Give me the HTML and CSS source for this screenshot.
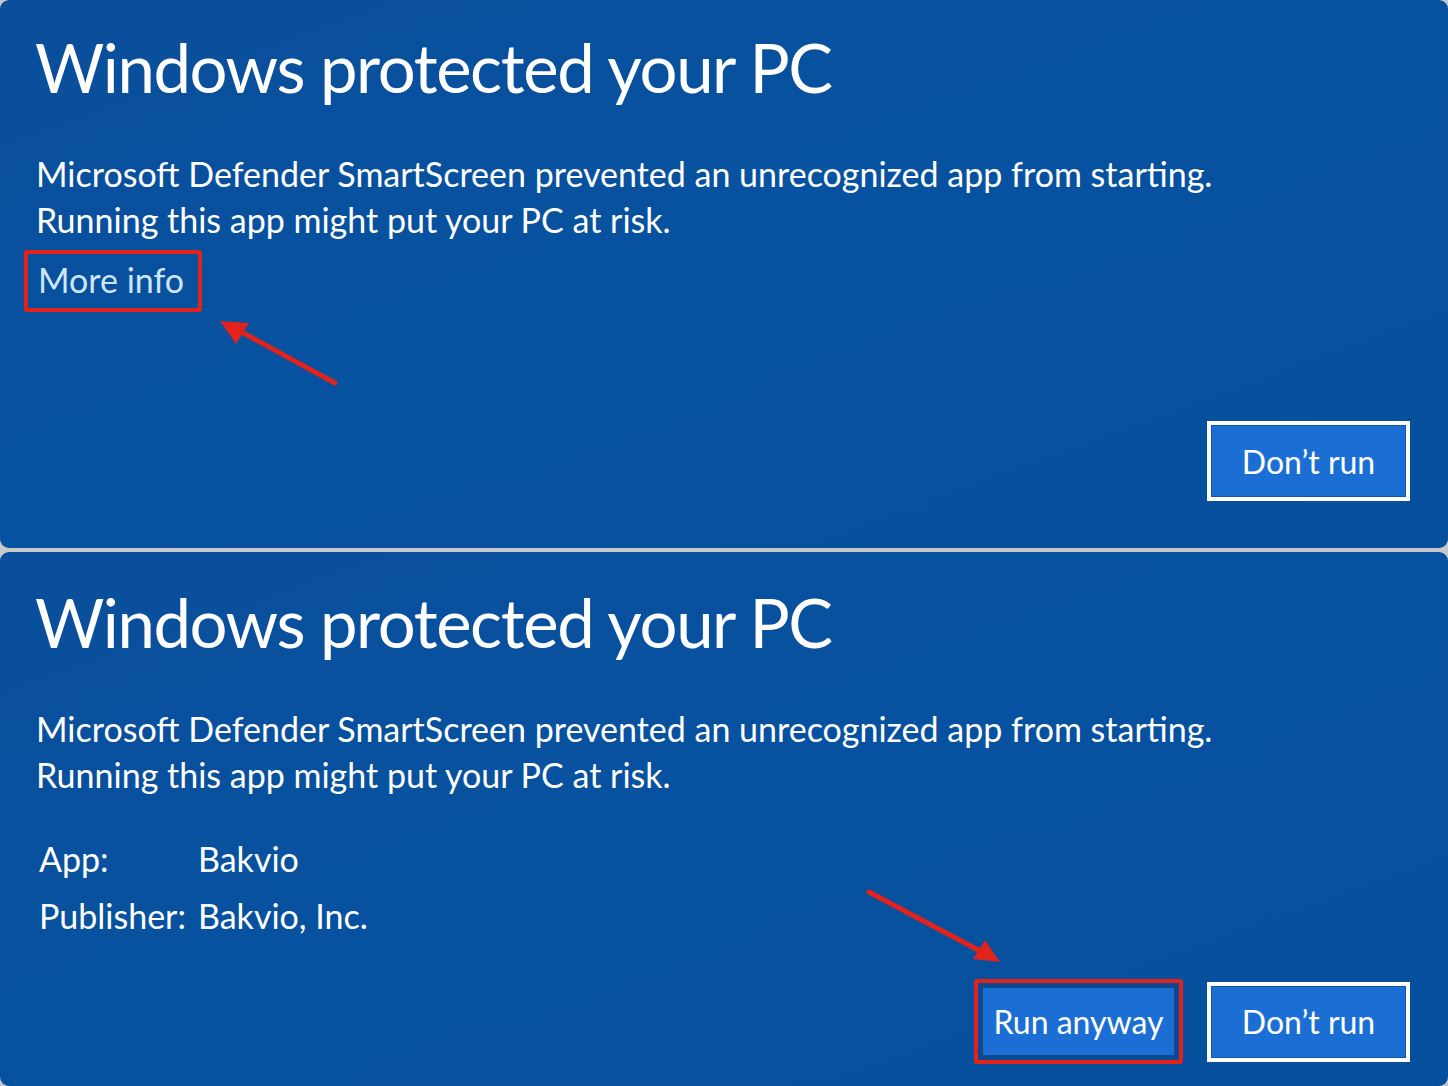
FILE: index.html
```html
<!DOCTYPE html>
<html lang="en">
<head>
    <meta charset="UTF-8">
    <meta name="viewport" content="width=device-width, initial-scale=1.0">
    <title>Windows protected your PC</title>
    <link rel="stylesheet" href="styles.css">
</head>
<body>

<div class="stack">
    <!-- first step: collapsed dialog -->
    <section class="dialog dialog-short">
        <h1>Windows protected your PC</h1>
        <p class="msg">Microsoft Defender SmartScreen prevented an unrecognized app from starting.<br>Running this app might put your PC at risk.</p>
        <div><a class="more-info mark">More info</a></div>
        <div class="actions">
            <button class="btn">Don’t run</button>
        </div>
        <svg class="pointer" width="1448" height="548" viewBox="0 0 1448 548">
            <line x1="335" y1="383" x2="238" y2="330" />
            <polygon points="220,321 249,323 236,344" />
        </svg>
    </section>

    <!-- second step: details expanded -->
    <section class="dialog dialog-tall">
        <h1>Windows protected your PC</h1>
        <p class="msg">Microsoft Defender SmartScreen prevented an unrecognized app from starting.<br>Running this app might put your PC at risk.</p>
        <div class="details">
            <span>App:</span><span>Bakvio</span>
            <span>Publisher:</span><span>Bakvio, Inc.</span>
        </div>
        <div class="actions">
            <div class="mark mark-btn"><button class="btn btn-focus">Run anyway</button></div>
            <button class="btn">Don’t run</button>
        </div>
        <svg class="pointer" width="1448" height="534" viewBox="0 0 1448 534">
            <line x1="869" y1="340" x2="982" y2="400" />
            <polygon points="1000,410 985,388 973,407" />
        </svg>
    </section>
</div>

</body>
</html>
```

FILE: styles.css
```css
*{
    margin: 0;
    padding: 0;
    box-sizing: border-box;
}

body{
    background: #c6c8cb;
    font-family: 'Lato', 'Noto Sans', sans-serif;
    color: #fff;
    overflow: hidden;
}

.stack{
    display: flex;
    flex-direction: column;
    gap: 4px;
}

.dialog{
    position: relative;
    display: flex;
    flex-direction: column;
    padding: 27px 38px 0 36px;
    background: linear-gradient(160deg, #0a4e9b 0%, #0752a0 45%, #064f9d 100%);
    border-radius: 9px;
}
.dialog-short{
    height: 548px;
    padding-bottom: 47px;
}
.dialog-tall{
    height: 534px;
    padding-top: 30px;
}

h1{
    font-size: 67px;
    font-weight: 400;
    line-height: 80px;
    letter-spacing: -1.4px;
    margin-left: -1px;
}

.msg{
    font-size: 34px;
    line-height: 46px;
    margin-top: 44px;
}

.mark{
    border: 4px solid #e1231b;
    border-radius: 3px;
}

.more-info{
    display: inline-block;
    margin: 7px 0 0 -12px;
    padding: 3px 14px 5px 10px;
    font-size: 34px;
    line-height: 46px;
    color: #cfe5fa;
}

.details{
    display: grid;
    grid-template-columns: 159px auto;
    row-gap: 11px;
    margin-top: 38px;
    margin-left: 3px;
    font-size: 34px;
    line-height: 46px;
}

.actions{
    display: flex;
    justify-content: flex-end;
    align-items: center;
    gap: 24px;
    margin-top: auto;
}
.dialog-tall .actions{
    margin-top: 40px;
}

.btn{
    width: 203px;
    height: 80px;
    border: 4px solid #fff;
    background: #1b6fd4;
    color: #fff;
    font-family: inherit;
    font-size: 32px;
    cursor: pointer;
    box-shadow: inset 0 0 0 1px #0d57b0;
}

.mark-btn{
    border-width: 4px;
}
.btn-focus{
    display: block;
    width: 201px;
    height: 77px;
    border: 5px solid #0b4a93;
    box-shadow: none;
}

.pointer{
    position: absolute;
    left: 0;
    top: 0;
    pointer-events: none;
}
.pointer line{
    stroke: #e1231b;
    stroke-width: 5;
    stroke-linecap: round;
}
.pointer polygon{
    fill: #e1231b;
}
```
